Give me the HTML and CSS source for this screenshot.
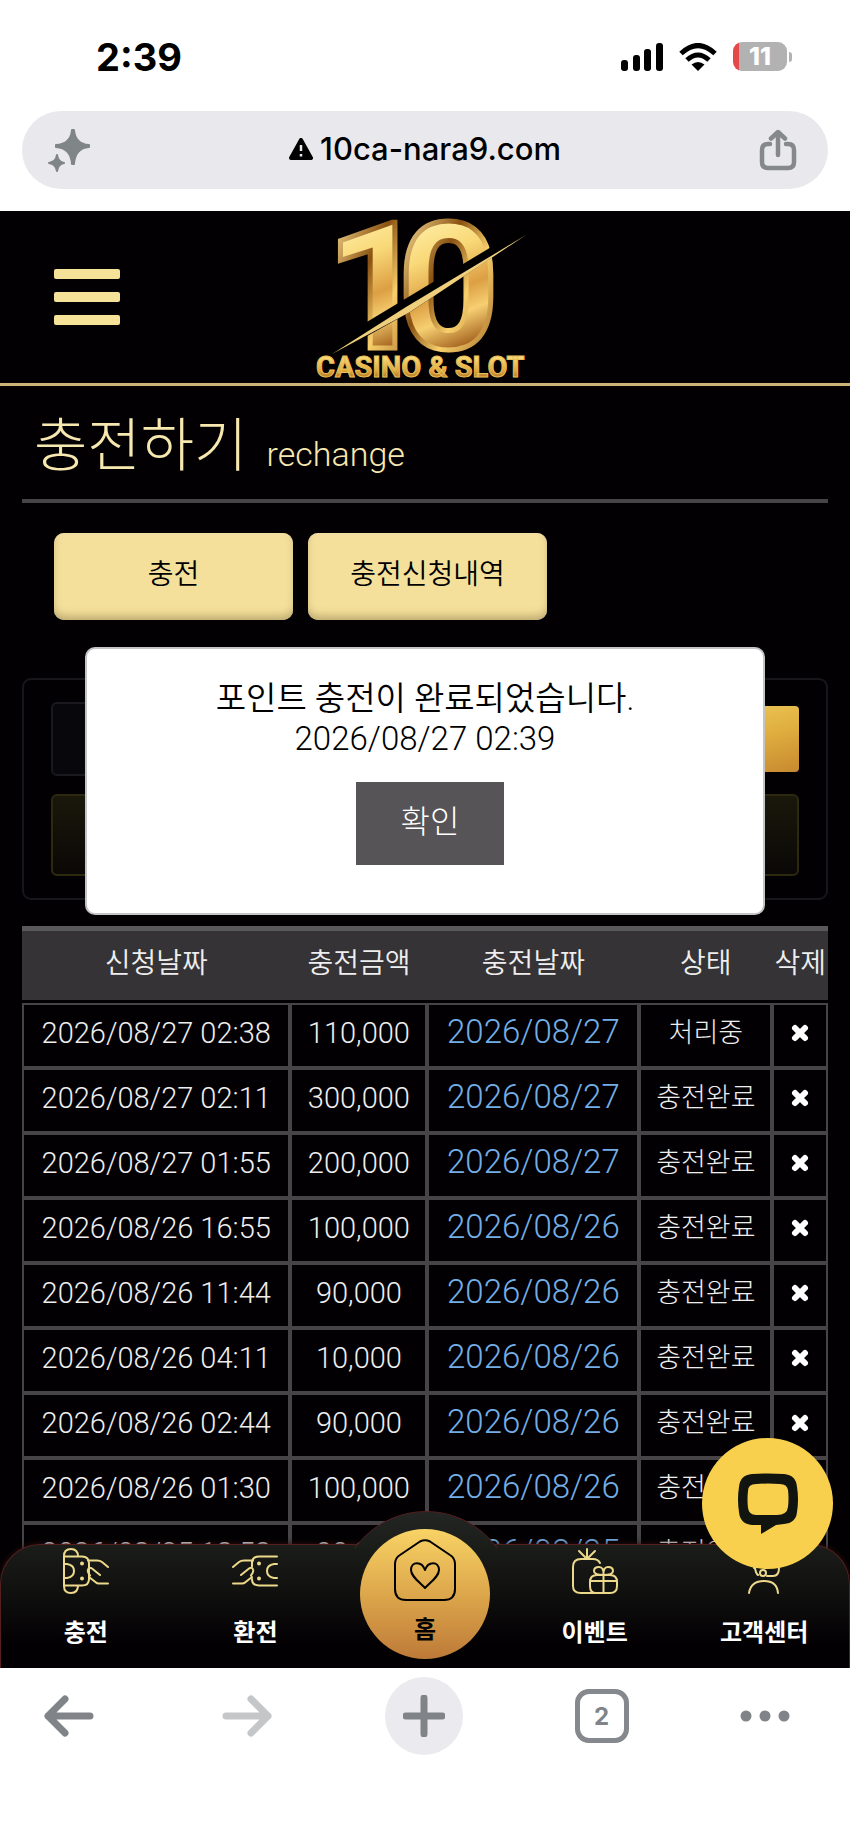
FILE: index.html
```
<!DOCTYPE html>
<html lang="ko">
<head>
<meta charset="utf-8">
<meta name="viewport" content="width=device-width, initial-scale=1">
<title>10 Casino &amp; Slot</title>
<link rel="stylesheet" href="styles.css">
</head>
<body>
<div class="phone">
  <div class="status">
    <span class="clock">2:39</span>
    <div class="indicators">
      <svg width="42" height="28" viewBox="0 0 42 28" aria-hidden="true"><rect x="0" y="17" width="7" height="11" rx="3"/><rect x="12" y="12" width="7" height="16" rx="3"/><rect x="23" y="6" width="7" height="22" rx="3"/><rect x="35" y="0" width="7" height="28" rx="3"/></svg>
      <svg width="38" height="28" viewBox="0 0 38 28" aria-hidden="true"><g fill="none" stroke="#000" stroke-width="5"><path d="M2 10.500Q19-5.500 36 10.500"/><path d="M8 17Q19 7 30 17"/></g><path d="M19 28L12.500 21.500Q19 16.500 25.500 21.500Z"/></svg>
      <div class="battery"><span class="level">11</span></div>
    </div>
  </div>

  <div class="address">
    <button class="icon-btn" aria-label="AI"><svg width="44" height="44" viewBox="0 0 44 44"><g fill="#808588" stroke="#808588" stroke-width="2" stroke-linejoin="round"><path d="M25 2L27 2Q28 16 42 17L42 19Q28 20 27 36L25 36Q24 20 9 19L9 17Q24 16 25 2Z"/><path d="M10 27Q11 34 17 35Q11 36 10 43Q9 36 2 35Q9 34 10 27Z"/></g></svg></button>
    <div class="url">
      <svg width="24" height="22" viewBox="0 0 24 22" aria-hidden="true"><path d="M12 2L22 20H2Z" stroke="#000" stroke-width="4" stroke-linejoin="round"/><path d="M12 7v6M12 16v2.500" stroke="#e9e9ed" stroke-width="2.500"/></svg>
      <span>10ca-nara9.com</span>
    </div>
    <button class="icon-btn" aria-label="공유"><svg width="38" height="42" viewBox="0 0 38 42"><g fill="none" stroke="#85888c" stroke-width="4.500" stroke-linecap="round" stroke-linejoin="round"><path d="M11 15H9Q3 15 3 21V33Q3 39 9 39H29Q35 39 35 33V21Q35 15 29 15H27"/><path d="M19 26V4M12 9.500L19 3L26 9.500"/></g></svg></button>
  </div>

  <main class="site">
    <header class="top">
      <button class="menu" aria-label="메뉴"><i></i><i></i><i></i></button>
      <a class="logo" href="#" aria-label="10 Casino &amp; Slot">
        <svg width="250" height="172" viewBox="0 0 250 172">
          <defs>
            <linearGradient id="gold" x1="0" y1="0" x2="0.200" y2="1"><stop offset="0.150" stop-color="#fff3b4"/><stop offset=".4" stop-color="#f9d978"/><stop offset=".6" stop-color="#dd9f43"/><stop offset=".72" stop-color="#f6cf72"/><stop offset=".9" stop-color="#9a5514"/></linearGradient>
            <linearGradient id="edge" x1="0" y1="0" x2="1" y2="1"><stop offset="0.100" stop-color="#ffe49a"/><stop offset=".4" stop-color="#8a5111"/><stop offset=".6" stop-color="#f7cf6b"/><stop offset="1" stop-color="#8a4b10"/></linearGradient>
            <linearGradient id="word" x1="0" y1="0" x2="0" y2="1"><stop offset="0.200" stop-color="#f9dc7c"/><stop offset=".6" stop-color="#e0a83e"/><stop offset="1" stop-color="#8a5012"/></linearGradient>
          </defs>
          <g class="digits">
            <text x="26" y="137">1</text>
            <text x="98" y="137">0</text>
          </g>
          <path d="M30 143L60 118L226 18L227 20L110 98Z" fill="#000" stroke="#000" stroke-width="5"/>
          <path d="M32 143L106 96L226 24L110 101Z" fill="#f0cf7c"/>
          <text class="word" x="16" y="166">CASINO &amp; SLOT</text>
        </svg>
      </a>
    </header>

    <div class="content">
      <h1 class="title">충전하기 <small>rechange</small></h1>

      <div class="tabs">
        <button class="tab">충전</button>
        <button class="tab">충전신청내역</button>
      </div>

      <form class="charge">
        <div class="line"><input class="amount" aria-label="충전금액"><button class="add" type="button" aria-label="추가"></button></div>
        <button class="submit" type="button" aria-label="충전신청"></button>
      </form>

      <table class="history">
        <colgroup><col class="c-date"><col class="c-sum"><col class="c-done"><col class="c-state"><col class="c-del"></colgroup>
        <thead><tr><th>신청날짜</th><th>충전금액</th><th>충전날짜</th><th>상태</th><th>삭제</th></tr></thead>
        <tbody>
          <tr><td>2026/08/27 02:38</td><td>110,000</td><td><a href="#">2026/08/27</a></td><td class="state">처리중</td><td><button class="del" aria-label="삭제"><svg width="20" height="20" viewBox="0 0 20 20"><path d="M5 5L15 15M15 5L5 15"/></svg></button></td></tr>
          <tr><td>2026/08/27 02:11</td><td>300,000</td><td><a href="#">2026/08/27</a></td><td class="state">충전완료</td><td><button class="del" aria-label="삭제"><svg width="20" height="20" viewBox="0 0 20 20"><path d="M5 5L15 15M15 5L5 15"/></svg></button></td></tr>
          <tr><td>2026/08/27 01:55</td><td>200,000</td><td><a href="#">2026/08/27</a></td><td class="state">충전완료</td><td><button class="del" aria-label="삭제"><svg width="20" height="20" viewBox="0 0 20 20"><path d="M5 5L15 15M15 5L5 15"/></svg></button></td></tr>
          <tr><td>2026/08/26 16:55</td><td>100,000</td><td><a href="#">2026/08/26</a></td><td class="state">충전완료</td><td><button class="del" aria-label="삭제"><svg width="20" height="20" viewBox="0 0 20 20"><path d="M5 5L15 15M15 5L5 15"/></svg></button></td></tr>
          <tr><td>2026/08/26 11:44</td><td>90,000</td><td><a href="#">2026/08/26</a></td><td class="state">충전완료</td><td><button class="del" aria-label="삭제"><svg width="20" height="20" viewBox="0 0 20 20"><path d="M5 5L15 15M15 5L5 15"/></svg></button></td></tr>
          <tr><td>2026/08/26 04:11</td><td>10,000</td><td><a href="#">2026/08/26</a></td><td class="state">충전완료</td><td><button class="del" aria-label="삭제"><svg width="20" height="20" viewBox="0 0 20 20"><path d="M5 5L15 15M15 5L5 15"/></svg></button></td></tr>
          <tr><td>2026/08/26 02:44</td><td>90,000</td><td><a href="#">2026/08/26</a></td><td class="state">충전완료</td><td><button class="del" aria-label="삭제"><svg width="20" height="20" viewBox="0 0 20 20"><path d="M5 5L15 15M15 5L5 15"/></svg></button></td></tr>
          <tr><td>2026/08/26 01:30</td><td>100,000</td><td><a href="#">2026/08/26</a></td><td class="state">충전완료</td><td><button class="del" aria-label="삭제"><svg width="20" height="20" viewBox="0 0 20 20"><path d="M5 5L15 15M15 5L5 15"/></svg></button></td></tr>
          <tr><td>2026/08/25 18:53</td><td>90,000</td><td><a href="#">2026/08/25</a></td><td class="state">충전완료</td><td><button class="del" aria-label="삭제"><svg width="20" height="20" viewBox="0 0 20 20"><path d="M5 5L15 15M15 5L5 15"/></svg></button></td></tr>
        </tbody>
      </table>
    </div>

    <div class="modal" role="dialog" aria-label="알림">
      <p class="message">포인트 충전이 완료되었습니다.</p>
      <p class="time">2026/08/27 02:39</p>
      <button class="ok">확인</button>
    </div>

    <nav class="dock">
      <a href="#"><svg class="line-icon" width="46" height="46" viewBox="0 0 46 46"><path d="M1 8Q1 1 8 1T15 8.500M1 8V38Q1 45 8 45T15 37.500M1 8.500H19Q26 8.500 26 15.500V18M1 37.500H19Q26 37.500 26 31M1 16H4Q11 17 11 23T4 30H1"/><path d="M25 12.500H34Q37 12.500 39 14L45 19M26 29L33 34.500Q34 35.500 36 35.500H45M37 27L29 20.500Q26 18.500 25 21.500Q24 24 27 27.500M26 18V31"/><circle class="dot" cx="19" cy="15.500" r="2"/><circle class="dot" cx="19" cy="30.500" r="2"/></svg><span>충전</span></a>
      <a href="#"><svg class="line-icon" width="46" height="46" viewBox="0 0 46 46"><path d="M45 8.500H27Q20 8.500 20 15.500V18M45 37.500H27Q20 37.500 20 31M45 16H42Q35 17 35 23T42 30H45"/><path d="M21 12.500H12Q9 12.500 7 14L1 19M20 29L13 34.500Q12 35.500 10 35.500H1M9 27L17 20.500Q20 18.500 21 21.500Q22 24 19 27.500M20 18V13"/><circle class="dot" cx="27" cy="15.500" r="2"/><circle class="dot" cx="27" cy="30.500" r="2"/></svg><span>환전</span></a>
      <a href="#" class="home"><svg width="62" height="62" viewBox="0 0 62 62"><path d="M26 2.500Q31 0 36 2.500L56 16Q61 19 61 25V50Q61 61 50 61H12Q1 61 1 50V25Q1 19 6 16Z"/><path d="M31 49C24 42 17 37 17 31C17 22 28 22 31 31C34 22 45 22 45 31C45 37 38 42 31 49Z"/></svg><span>홈</span></a>
      <a href="#"><svg class="line-icon" width="46" height="46" viewBox="0 0 46 46"><path d="M28 15Q26 11 21 11H9Q1 11 1 19V38Q1 45 9 45H38Q45 45 45 38V34Q45 27 38 27H25Q18 27 18 34V38Q18 45 24 45M15 11V1M14 10L7 3M16 10L23 3M31.500 45V26M31.500 27Q22 27 22 23T27 19T31.500 27M31.500 27Q41 27 41 23T36 19T31.500 27M18 33H45"/></svg><span>이벤트</span></a>
      <a href="#"><svg class="line-icon" width="46" height="46" viewBox="0 0 46 46"><path d="M8 45Q10 33 23 33T37 45M13 20Q13 5 25 5T38 20Q38 28 32 28H26M14 20Q15 26 17 27"/><circle cx="22" cy="25" r="3"/></svg><span>고객센터</span></a>
    </nav>

    <button class="chat" aria-label="채팅"><svg width="62" height="62" viewBox="0 0 62 62"><path fill="#11140f" fill-rule="evenodd" d="M15 1Q31 0 47 1Q59 2 60 14Q62 26 60 39Q59 50 47 51L39 52L24 61V42H40Q50 42 51 34Q52 25 51 17Q50 11 43 11Q31 10 19 11Q11 11 11 18Q10 26 11 35Q12 42 19 42H24V52H15Q3 51 2 39Q0 26 2 14Q3 2 15 1Z"/></svg></button>
  </main>

  <div class="toolbar">
    <button aria-label="뒤로"><svg width="50" height="42" viewBox="0 0 50 42"><path d="M46 21H4M21 4L4 21L21 38"/></svg></button>
    <button aria-label="앞으로" class="faded"><svg width="50" height="42" viewBox="0 0 50 42"><path d="M4 21H46M29 4L46 21L29 38"/></svg></button>
    <button aria-label="새 탭" class="plus"><svg width="42" height="42" viewBox="0 0 42 42"><path d="M21 3V39M3 21H39"/></svg></button>
    <button aria-label="탭"><span class="count">2</span></button>
    <button aria-label="더보기" class="more"><svg width="50" height="12" viewBox="0 0 50 12"><circle cx="6" cy="6" r="5.500"/><circle cx="25" cy="6" r="5.500"/><circle cx="44" cy="6" r="5.500"/></svg></button>
  </div>
</div>
</body>
</html>
```
FILE: styles.css
```
* { box-sizing: border-box; }
body {
  margin: 0;
  background: #fff;
  font-family: Roboto, "Noto Sans CJK KR", sans-serif;
  font-weight: 300;
}
button, input { font: inherit; color: inherit; border: 0; padding: 0; background: none; }
a { color: inherit; text-decoration: none; }
svg { display: block; flex: none; }

.phone { display: flex; flex-direction: column; height: 100vh; }

/* Status bar */
.status {
  display: flex;
  align-items: center;
  justify-content: space-between;
  height: 111px;
  padding: 2px 63px 0 96px;
  flex: none;
}
.clock { font: 700 38px/40px Inter, sans-serif; }
.indicators { display: flex; align-items: center; gap: 16px; }
.battery {
  position: relative;
  width: 54px;
  height: 29px;
  border-radius: 9px;
  background: linear-gradient(90deg, #e5484b 6px, #b2b2b2 6px);
  text-align: center;
}
.battery::after {
  content: "";
  position: absolute;
  left: 56px;
  top: 10px;
  width: 3px;
  height: 10px;
  border-radius: 0 4px 4px 0;
  background: #b2b2b2;
}
.level { display: block; font: 800 25px/29px Inter, sans-serif; color: #fff; }

/* Address bar */
.address {
  display: flex;
  align-items: center;
  justify-content: space-between;
  height: 78px;
  margin: 0 22px 22px;
  padding: 0 31px 0 25px;
  border-radius: 39px;
  background: #e9e9ed;
  flex: none;
}
.url { display: flex; align-items: center; gap: 7px; padding-bottom: 2px; font: 500 31px/40px Inter, sans-serif; }

/* Site */
.site {
  position: relative;
  flex: 1;
  min-height: 0;
  overflow: hidden;
  background: #020003;
  color: #eee;
}
.top {
  display: grid;
  grid-template-columns: 1fr auto 1fr;
  align-items: center;
  height: 175px;
  padding: 0 54px;
  border-bottom: 3px solid #cdb375;
}
.menu { display: grid; gap: 13px; width: 66px; }
.menu i { height: 10px; border-radius: 2px; background: #f6e198; }
.digits text {
  font: 700 176px Roboto, sans-serif;
  fill: url(#gold);
  stroke: url(#edge);
  stroke-width: 5px;
}
.word { font: 700 29px Roboto, sans-serif; fill: url(#word); stroke: #e9bd57; stroke-width: 1px; }

.content { padding: 0 22px; }
.title {
  margin: 0;
  height: 117px;
  padding: 20px 12px 0;
  border-bottom: 4px solid #464546;
  font-size: 58px;
  line-height: 80px;
  font-weight: 300;
  color: #f7e8b0;
}
.title small { margin-left: 5px; font-size: 34px; }
.tabs { display: flex; gap: 15px; padding: 30px 32px 0; }
.tab {
  width: 239px;
  height: 87px;
  padding-bottom: 10px;
  border-radius: 10px;
  background: #f4e09a;
  box-shadow: inset 0 -6px 8px -2px #bda970, inset 0 3px 6px #f3dda4;
  color: #000;
  font-size: 28px;
  font-weight: 350;
}
.charge {
  display: grid;
  gap: 18px;
  margin: 58px 0 26px;
  padding: 22px 27px;
  border: 2px solid #17161b;
  border-radius: 9px;
}
.line { display: flex; align-items: center; }
.amount { flex: 1; height: 74px; border: 2px solid #1a191f; border-radius: 6px; background: #08070b; }
.add { width: 120px; height: 66px; border-radius: 4px; background: linear-gradient(165deg, #f0d060, #e0b040 50%, #c8892f); }
.submit { height: 82px; border: 2px solid #2d290f; border-radius: 6px; background: linear-gradient(#1a170b, #0a0806); }

.history {
  width: 100%;
  table-layout: fixed;
  border-collapse: separate;
  border-spacing: 0;
  font-size: 28px;
  text-align: center;
}
.c-date { width: 33.3%; }
.c-sum { width: 17%; }
.c-done { width: 26.3%; }
.c-state { width: 16.500%; }
.c-del { width: 6.900%; }
.history th {
  height: 77px;
  padding: 0 0 10px;
  border-top: 5px solid #59585a;
  border-bottom: 3px solid #020003;
  background: #353335;
  font-weight: 350;
  white-space: nowrap;
}
.history td {
  height: 65px;
  padding: 0 0 6px;
  border: 2px solid #464446;
  line-height: 40px;
  font-size: 29px;
  white-space: nowrap;
}
.history td a { font-size: 33px; color: #73aee6; }
.history .state { font-size: 27px; }
.del { display: block; margin: 0 auto; }
.del path { stroke: #fff; stroke-width: 6px; stroke-linecap: round; }

/* Notice */
.modal {
  position: absolute;
  top: 436px;
  left: 10%;
  right: 10%;
  height: 268px;
  padding-top: 30px;
  border: 2px solid #c4c4c6;
  border-radius: 10px;
  background: #fff;
  color: #000;
  text-align: center;
}
.modal p { margin: 0; line-height: 40px; }
.message { font-size: 33px; font-weight: 350; }
.time { font-size: 33px; }
.ok {
  width: 148px;
  height: 83px;
  margin: 23px 0 0 10px;
  padding-bottom: 10px;
  background: #575457;
  color: #fff;
  font-size: 32px;
}

/* Site dock */
.dock {
  position: absolute;
  left: 0;
  right: 0;
  bottom: 0;
  display: grid;
  grid-template-columns: repeat(5, 1fr);
  height: 124px;
  border: 1px solid #54201f;
  border-bottom: 0;
  border-radius: 40px 40px 0 0;
  background: linear-gradient(#1b1d19, #0d0c0c 50%, #030003 80%);
  box-shadow: 0 0 6px #30100f;
  color: #fff;
  font-size: 24px;
  font-weight: 700;
}
.dock::before {
  content: "";
  position: absolute;
  left: 50%;
  top: -34px;
  width: 174px;
  height: 174px;
  margin-left: -87px;
  border: 1px solid #54201f;
  border-radius: 50%;
  background: linear-gradient(#242624, #1b1d19 34px);
  clip-path: inset(0 0 139px 0);
}
.dock a { display: flex; flex-direction: column; align-items: center; gap: 21px; padding-top: 3px; line-height: 36px; }
.line-icon { fill: none; stroke: #ecd98b; stroke-width: 2px; stroke-linecap: round; }
.line-icon .dot { fill: #ecd98b; stroke: none; }
.dock .home {
  position: relative;
  justify-self: center;
  width: 130px;
  height: 130px;
  margin-top: -16px;
  padding-top: 10px;
  gap: 11px;
  border-radius: 50%;
  background: linear-gradient(#f8d365, #dda74b 50%, #bd7a38);
  color: #000;
}
.home svg { fill: none; stroke: #000; stroke-width: 2px; stroke-linejoin: round; }

.chat {
  position: absolute;
  right: 17px;
  bottom: 99px;
  display: grid;
  place-items: center;
  width: 131px;
  height: 131px;
  border-radius: 50%;
  background: #f8d04e;
}

/* Browser toolbar */
.toolbar {
  display: flex;
  align-items: flex-start;
  justify-content: space-between;
  height: 171px;
  padding: 9px 60px 0 30px;
  flex: none;
}
.toolbar button { display: grid; place-items: center; width: 78px; height: 78px; border-radius: 50%; }
.toolbar .more { width: 50px; }
.toolbar path { fill: none; stroke: #808489; stroke-width: 7px; stroke-linecap: round; stroke-linejoin: round; }
.toolbar circle { fill: #808489; }
.toolbar .faded path { stroke: #c5c6c8; }
.toolbar .plus { background: #ebebef; }
.count {
  width: 54px;
  height: 54px;
  border: 5px solid #85888c;
  border-radius: 14px;
  color: #808489;
  font: 700 24px/45px Inter, sans-serif;
  text-align: center;
}
```
